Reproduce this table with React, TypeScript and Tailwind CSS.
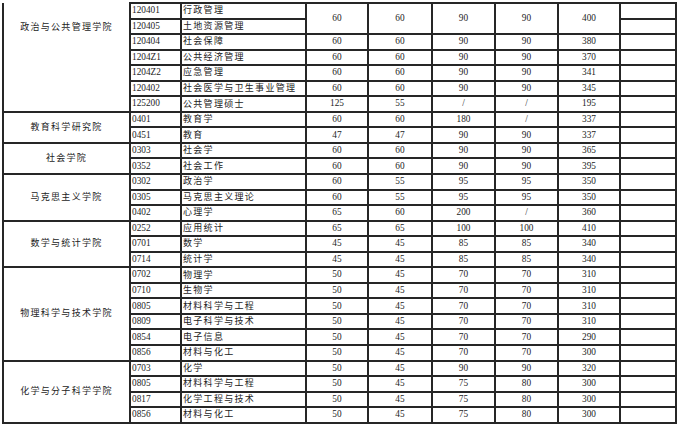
import React from "react";

type Row = { code: string; name: string; s?: string[] };
type Group = { college: string; rows: Row[]; textTop?: boolean };

const GROUPS: Group[] = [
  {
    college: "政治与公共管理学院",
    textTop: true,
    rows: [
      { code: "120401", name: "行政管理", s: ["60", "60", "90", "90", "400"] },
      { code: "120405", name: "土地资源管理" },
      { code: "120404", name: "社会保障", s: ["60", "60", "90", "90", "380"] },
      { code: "1204Z1", name: "公共经济管理", s: ["60", "60", "90", "90", "370"] },
      { code: "1204Z2", name: "应急管理", s: ["60", "60", "90", "90", "341"] },
      { code: "120402", name: "社会医学与卫生事业管理", s: ["60", "60", "90", "90", "345"] },
      { code: "125200", name: "公共管理硕士", s: ["125", "55", "/", "/", "195"] },
    ],
  },
  {
    college: "教育科学研究院",
    rows: [
      { code: "0401", name: "教育学", s: ["60", "60", "180", "/", "337"] },
      { code: "0451", name: "教育", s: ["47", "47", "90", "90", "337"] },
    ],
  },
  {
    college: "社会学院",
    rows: [
      { code: "0303", name: "社会学", s: ["60", "60", "90", "90", "365"] },
      { code: "0352", name: "社会工作", s: ["60", "60", "90", "90", "395"] },
    ],
  },
  {
    college: "马克思主义学院",
    rows: [
      { code: "0302", name: "政治学", s: ["60", "55", "95", "95", "350"] },
      { code: "0305", name: "马克思主义理论", s: ["60", "55", "95", "95", "350"] },
      { code: "0402", name: "心理学", s: ["65", "60", "200", "/", "360"] },
    ],
  },
  {
    college: "数学与统计学院",
    rows: [
      { code: "0252", name: "应用统计", s: ["65", "65", "100", "100", "410"] },
      { code: "0701", name: "数学", s: ["45", "45", "85", "85", "340"] },
      { code: "0714", name: "统计学", s: ["45", "45", "85", "85", "340"] },
    ],
  },
  {
    college: "物理科学与技术学院",
    rows: [
      { code: "0702", name: "物理学", s: ["50", "45", "70", "70", "310"] },
      { code: "0710", name: "生物学", s: ["50", "45", "70", "70", "310"] },
      { code: "0805", name: "材料科学与工程", s: ["50", "45", "70", "70", "310"] },
      { code: "0809", name: "电子科学与技术", s: ["50", "45", "70", "70", "310"] },
      { code: "0854", name: "电子信息", s: ["50", "45", "70", "70", "290"] },
      { code: "0856", name: "材料与化工", s: ["50", "45", "70", "70", "300"] },
    ],
  },
  {
    college: "化学与分子科学学院",
    rows: [
      { code: "0703", name: "化学", s: ["50", "45", "90", "90", "320"] },
      { code: "0805", name: "材料科学与工程", s: ["50", "45", "75", "80", "300"] },
      { code: "0817", name: "化学工程与技术", s: ["50", "45", "75", "80", "300"] },
      { code: "0856", name: "材料与化工", s: ["50", "45", "75", "80", "300"] },
    ],
  },
];

const cell = "border-2 border-[#262626] p-0 h-[15.55px] leading-none";

export default function App() {
  return (
    <div
      className="w-[680px] h-[427px] bg-white overflow-hidden pt-[2px] text-[#1c1c1c] text-[9px]"
      style={{ fontFamily: '"Liberation Serif", "Noto Sans CJK SC", serif' }}
    >
      <table className="ml-[2px] w-[675px] table-fixed border-collapse">
        <colgroup>
          <col className="w-[127px]" />
          <col className="w-[51px]" />
          <col className="w-[125px]" />
          <col className="w-[62px]" />
          <col className="w-[64px]" />
          <col className="w-[63px]" />
          <col className="w-[63px]" />
          <col className="w-[62px]" />
          <col className="w-[56px]" />
        </colgroup>
        <tbody>
          {GROUPS.map((g) =>
            g.rows.map((r, i) => (
              <tr key={g.college + r.code}>
                {i === 0 && (
                  <td
                    rowSpan={g.rows.length}
                    className={
                      g.textTop
                        ? "border-2 border-t-0 border-[#262626] p-0 align-top pt-[18px] text-center tracking-[1.3px]"
                        : "border-2 border-[#262626] p-0 text-center tracking-[1.3px]"
                    }
                  >
                    {g.college}
                  </td>
                )}
                <td className={`${cell} pl-[1px] text-[9.3px]`}>{r.code}</td>
                <td className={`${cell} pl-[1px] tracking-[1.3px]`}>{r.name}</td>
                {r.s &&
                  r.s.map((v, k) => (
                    <td
                      key={k}
                      rowSpan={g.textTop && i === 0 ? 2 : 1}
                      className={`${cell} text-center text-[9.3px]`}
                    >
                      {v}
                    </td>
                  ))}
                <td className={cell}></td>
              </tr>
            ))
          )}
        </tbody>
      </table>
    </div>
  );
}
